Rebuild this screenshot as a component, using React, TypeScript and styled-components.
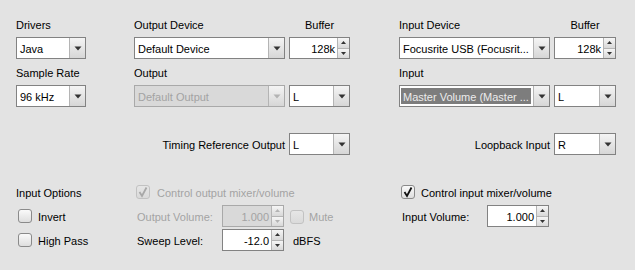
import React from 'react';
import styled, { createGlobalStyle, css } from 'styled-components';

const Global = createGlobalStyle`
  html, body { margin: 0; padding: 0; background: #e3e3e3; }
  body { font-family: "Liberation Sans", Arial, sans-serif; font-size: 11px; color: #000; }
`;

const Panel = styled.div`
  width: 635px;
  height: 270px;
  box-sizing: border-box;
  padding: 18px 0 0 16px;
  background: #e3e3e3;
  overflow: hidden;
`;

const TopGrid = styled.div`
  display: grid;
  grid-template-columns: 70px 48px 151px 4px 61px 49px 151px 4px 62px;
  grid-template-rows: 19px 22px 26px 22px 26px 22px;
`;

const Cell = styled.div<{ $col: string; $row: number; $end?: boolean }>`
  grid-column: ${(p) => p.$col};
  grid-row: ${(p) => p.$row};
  display: flex;
  justify-content: ${(p) => (p.$end ? 'flex-end' : 'flex-start')};
  align-items: center;
  min-width: 0;
`;

const Caption = styled.div<{ $col: string; $row: number; $pad?: number; $center?: boolean }>`
  grid-column: ${(p) => p.$col};
  grid-row: ${(p) => p.$row};
  line-height: 14px;
  padding-top: ${(p) => p.$pad ?? 0}px;
  text-align: ${(p) => (p.$center ? 'center' : 'left')};
  white-space: nowrap;
`;

const SideLabel = styled.span`
  line-height: 14px;
  padding-top: 1px;
  white-space: nowrap;
`;

/* ---------- Combo box ---------- */
const Combo = styled.div<{ $w: number; $disabled?: boolean }>`
  width: ${(p) => p.$w}px;
  height: 22px;
  box-sizing: border-box;
  display: flex;
  border: 1px solid ${(p) => (p.$disabled ? '#a9a9a9' : '#828282')};
  background: ${(p) => (p.$disabled ? '#d9d9d9' : '#ffffff')};
  flex-shrink: 0;
`;

const ComboText = styled.div<{ $disabled?: boolean; $selected?: boolean }>`
  flex: 1;
  min-width: 0;
  display: flex;
  align-items: center;
  padding: 1px 2px 0 3px;
  line-height: 14px;
  white-space: nowrap;
  overflow: hidden;
  color: ${(p) => (p.$disabled ? '#a3a3a3' : '#000')};
  ${(p) =>
    p.$selected &&
    css`
      margin: 2px 2px 2px 1px;
      padding: 1px 2px 0;
      background: #7d7d7d;
      color: #ececec;
    `}
`;

const ComboButton = styled.div<{ $disabled?: boolean }>`
  width: 16px;
  flex-shrink: 0;
  box-sizing: border-box;
  border-left: 1px solid #b4b4b4;
  background: linear-gradient(#f4f4f4, #d6d6d6);
  display: flex;
  align-items: center;
  justify-content: center;
  color: ${(p) => (p.$disabled ? '#b3b3b3' : '#333')};
`;

const DownArrow = () => (
  <svg width="8" height="5" viewBox="0 0 8 5">
    <path d="M0.5 0.5 H7.5 L4 4.5 Z" fill="currentColor" />
  </svg>
);

const ComboBox: React.FC<{ w: number; text: string; disabled?: boolean; selected?: boolean }> = ({
  w,
  text,
  disabled,
  selected,
}) => (
  <Combo $w={w} $disabled={disabled}>
    <ComboText $disabled={disabled} $selected={selected}>{text}</ComboText>
    <ComboButton $disabled={disabled}>
      <DownArrow />
    </ComboButton>
  </Combo>
);

/* ---------- Spinner ---------- */
const Spin = styled.div<{ $w: number; $disabled?: boolean }>`
  width: ${(p) => p.$w}px;
  height: 22px;
  box-sizing: border-box;
  display: flex;
  border: 1px solid ${(p) => (p.$disabled ? '#a9a9a9' : '#828282')};
  background: ${(p) => (p.$disabled ? '#d9d9d9' : '#ffffff')};
  flex-shrink: 0;
`;

const SpinField = styled.div<{ $disabled?: boolean }>`
  flex: 1;
  display: flex;
  align-items: center;
  justify-content: flex-end;
  padding: 1px 2px 0 0;
  line-height: 14px;
  color: ${(p) => (p.$disabled ? '#a3a3a3' : '#000')};
`;

const SpinButtons = styled.div`
  width: 11px;
  display: flex;
  flex-direction: column;
  border-left: 1px solid #b4b4b4;
`;

const SpinButton = styled.div<{ $disabled?: boolean; $top?: boolean }>`
  flex: 1;
  display: flex;
  align-items: center;
  justify-content: center;
  background: linear-gradient(#f6f6f6, #d8d8d8);
  border-top: ${(p) => (p.$top ? 'none' : '1px solid #b4b4b4')};
  color: ${(p) => (p.$disabled ? '#b3b3b3' : '#333')};
`;

const SmallArrow: React.FC<{ up?: boolean }> = ({ up }) => (
  <svg width="5" height="3" viewBox="0 0 5 3">
    <path d={up ? 'M0 3 H5 L2.5 0 Z' : 'M0 0 H5 L2.5 3 Z'} fill="currentColor" />
  </svg>
);

const Spinner: React.FC<{ w: number; value: string; disabled?: boolean }> = ({ w, value, disabled }) => (
  <Spin $w={w} $disabled={disabled}>
    <SpinField $disabled={disabled}>{value}</SpinField>
    <SpinButtons>
      <SpinButton $top $disabled={disabled}>
        <SmallArrow up />
      </SpinButton>
      <SpinButton $disabled={disabled}>
        <SmallArrow />
      </SpinButton>
    </SpinButtons>
  </Spin>
);

/* ---------- Checkbox ---------- */
const CheckRow = styled.div<{ $indent?: number; $gap?: number }>`
  display: flex;
  align-items: center;
  gap: ${(p) => p.$gap ?? 6}px;
  padding-left: ${(p) => p.$indent ?? 0}px;
  line-height: 14px;
  white-space: nowrap;
`;

const Box = styled.div<{ $disabled?: boolean }>`
  width: 14px;
  height: 14px;
  box-sizing: border-box;
  border: 1px solid ${(p) => (p.$disabled ? '#c2c2c2' : '#8a8a8a')};
  border-radius: 3px;
  background: ${(p) =>
    p.$disabled ? 'linear-gradient(#e6e6e6, #dadada)' : 'linear-gradient(#fafafa, #dedede)'};
  display: flex;
  align-items: center;
  justify-content: center;
  flex-shrink: 0;
  color: ${(p) => (p.$disabled ? '#a8a8a8' : '#111')};
`;

const CheckText = styled.span<{ $disabled?: boolean }>`
  padding-top: 1px;
  color: ${(p) => (p.$disabled ? '#a3a3a3' : '#000')};
`;

const CheckBox: React.FC<{ label: string; checked?: boolean; disabled?: boolean; indent?: number; gap?: number }> = ({
  label,
  checked,
  disabled,
  indent,
  gap,
}) => (
  <CheckRow $indent={indent} $gap={gap}>
    <Box $disabled={disabled}>
      {checked && (
        <svg width="12" height="12" viewBox="0 0 12 12">
          <path d="M2.5 6 L5 10 L9.5 1.5" fill="none" stroke="currentColor" strokeWidth="1.8" />
        </svg>
      )}
    </Box>
    <CheckText $disabled={disabled}>{label}</CheckText>
  </CheckRow>
);

/* ---------- Bottom section ---------- */
const BottomGrid = styled.div`
  margin-top: 26px;
  display: grid;
  grid-template-columns: 120px 265px auto;
  grid-auto-rows: 22px;
  row-gap: 2px;
  align-items: center;
`;

const GroupTitle = styled.div`
  line-height: 14px;
  padding-top: 2px;
  white-space: nowrap;
`;

const FieldRow = styled.div`
  display: flex;
  align-items: center;
  white-space: nowrap;
`;

const FieldLabel = styled.span<{ $disabled?: boolean }>`
  width: 86px;
  box-sizing: border-box;
  padding: 1px 0 0 1px;
  flex-shrink: 0;
  line-height: 14px;
  color: ${(p) => (p.$disabled ? '#a3a3a3' : '#000')};
`;

const Trail = styled.div<{ $gap: number; $disabled?: boolean }>`
  margin-left: ${(p) => p.$gap}px;
  padding-top: 1px;
  line-height: 14px;
  color: ${(p) => (p.$disabled ? '#a3a3a3' : '#000')};
`;

export default function App() {
  return (
    <Panel>
      <Global />
      <TopGrid>
        <Caption $col="1 / 3" $row={1}>Drivers</Caption>
        <Caption $col="3" $row={1}>Output Device</Caption>
        <Caption $col="5" $row={1} $center>Buffer</Caption>
        <Caption $col="7" $row={1}>Input Device</Caption>
        <Caption $col="9" $row={1} $center>Buffer</Caption>

        <Cell $col="1" $row={2}><ComboBox w={70} text="Java" /></Cell>
        <Cell $col="3" $row={2}><ComboBox w={151} text="Default Device" /></Cell>
        <Cell $col="5" $row={2}><Spinner w={61} value="128k" /></Cell>
        <Cell $col="7" $row={2}><ComboBox w={151} text="Focusrite USB (Focusrit..." /></Cell>
        <Cell $col="9" $row={2}><Spinner w={62} value="128k" /></Cell>

        <Caption $col="1 / 3" $row={3} $pad={7}>Sample Rate</Caption>
        <Caption $col="3" $row={3} $pad={7}>Output</Caption>
        <Caption $col="7" $row={3} $pad={7}>Input</Caption>

        <Cell $col="1" $row={4}><ComboBox w={70} text="96 kHz" /></Cell>
        <Cell $col="3" $row={4}><ComboBox w={151} text="Default Output" disabled /></Cell>
        <Cell $col="5" $row={4}><ComboBox w={61} text="L" /></Cell>
        <Cell $col="7" $row={4}><ComboBox w={151} text="Master Volume (Master ..." selected /></Cell>
        <Cell $col="9" $row={4}><ComboBox w={62} text="L" /></Cell>

        <Cell $col="1 / 4" $row={6} $end><SideLabel>Timing Reference Output</SideLabel></Cell>
        <Cell $col="5" $row={6}><ComboBox w={61} text="L" /></Cell>
        <Cell $col="7" $row={6} $end><SideLabel>Loopback Input</SideLabel></Cell>
        <Cell $col="9" $row={6}><ComboBox w={62} text="R" /></Cell>
      </TopGrid>

      <BottomGrid>
        <GroupTitle>Input Options</GroupTitle>
        <CheckBox label="Control output mixer/volume" checked disabled gap={7} />
        <CheckBox label="Control input mixer/volume" checked />

        <CheckBox label="Invert" indent={2} />
        <FieldRow>
          <FieldLabel $disabled>Output Volume:</FieldLabel>
          <Spinner w={62} value="1.000" disabled />
          <Trail $gap={6}>
            <CheckBox label="Mute" disabled gap={5} />
          </Trail>
        </FieldRow>
        <FieldRow>
          <FieldLabel>Input Volume:</FieldLabel>
          <Spinner w={62} value="1.000" />
        </FieldRow>

        <CheckBox label="High Pass" indent={2} />
        <FieldRow>
          <FieldLabel>Sweep Level:</FieldLabel>
          <Spinner w={62} value="-12.0" />
          <Trail $gap={9}>dBFS</Trail>
        </FieldRow>
      </BottomGrid>
    </Panel>
  );
}
